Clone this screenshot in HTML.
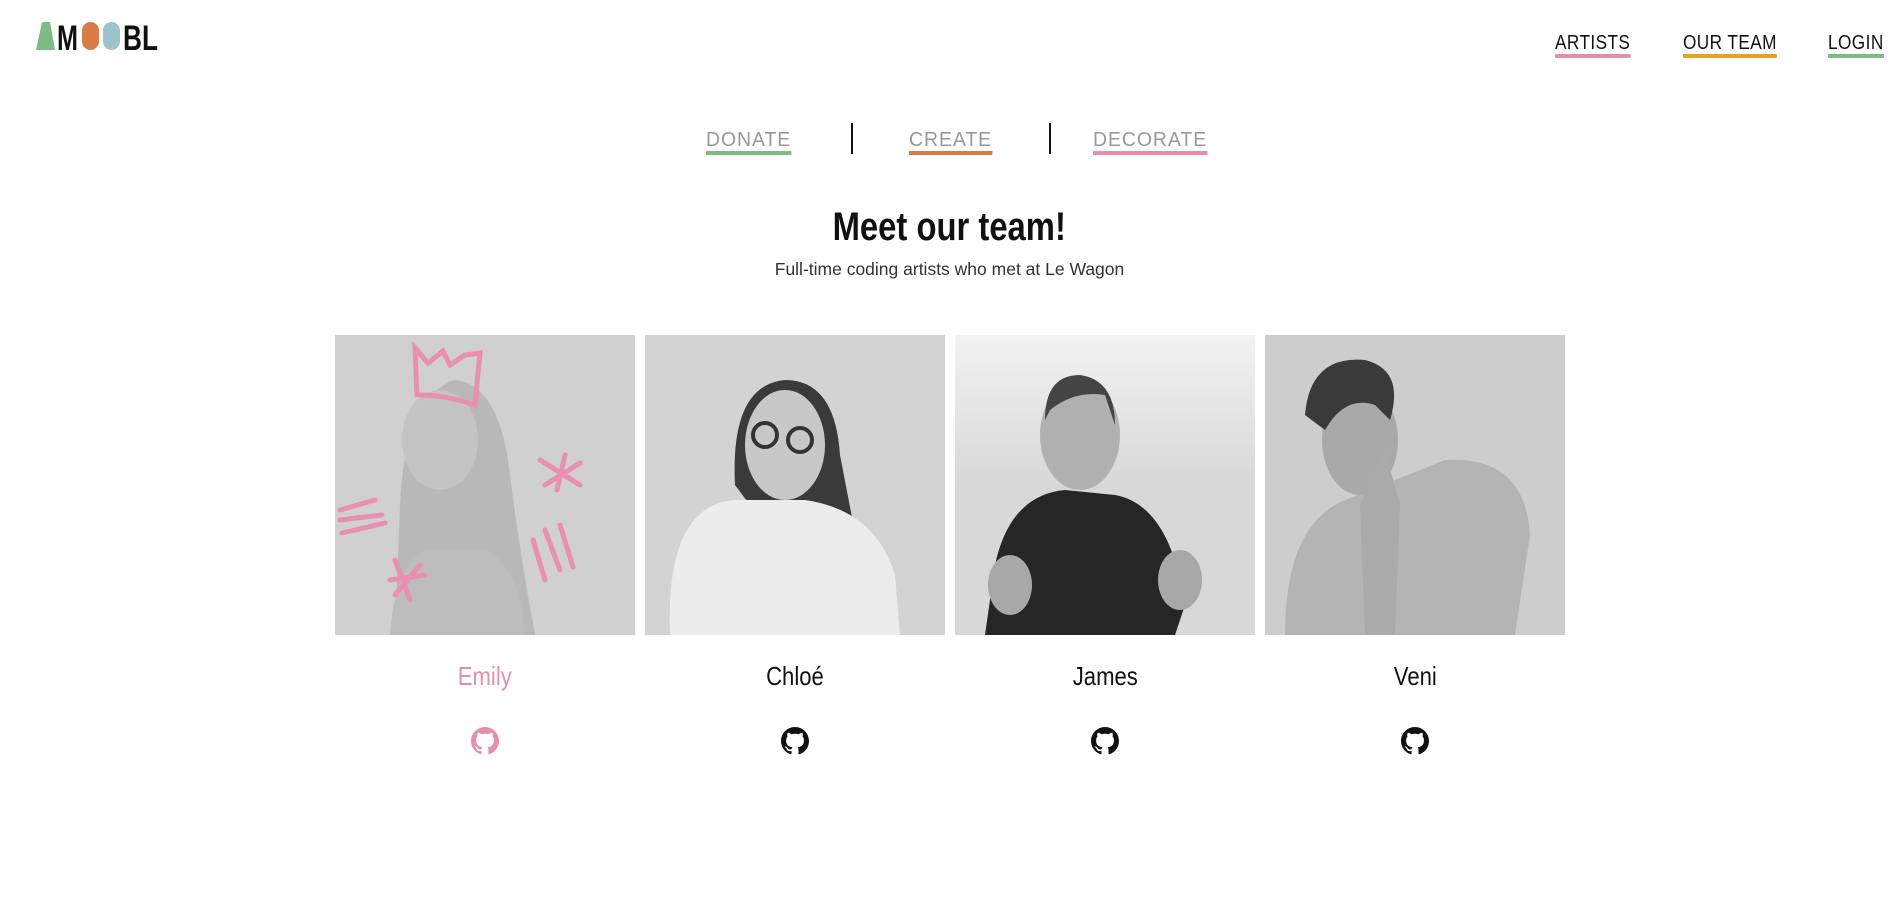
<!DOCTYPE html>
<html><head><meta charset="utf-8"><style>
html,body{margin:0;padding:0;background:#fff;width:1899px;height:916px;overflow:hidden;font-family:"Liberation Sans",sans-serif;}
.abs{position:absolute}
.nav a{position:absolute;top:32px;font-size:20px;color:#111;text-decoration:none;transform:scaleX(.86);transform-origin:left top;letter-spacing:.5px;border-bottom:4px solid;line-height:22px;padding-bottom:0}
.sub{position:absolute;top:129px;font-size:20px;color:#999;font-weight:300;letter-spacing:1px;line-height:22px;border-bottom:4px solid;transform:scaleX(.97);transform-origin:left top}
.div{position:absolute;top:123px;width:2px;height:31px;background:#111}
.photo{position:absolute;top:335px;width:300px;height:300px}
.name{position:absolute;top:661px;width:300px;text-align:center;font-size:26px;color:#111}
.name span{display:inline-block;transform:scaleX(.85)}
.gh{position:absolute;top:727px;width:300px;text-align:center}
</style></head><body>
<svg class="abs" style="left:36px;top:22px" width="130" height="30" viewBox="0 0 130 30">
<polygon points="6,0 14,0 19,28 0,28" fill="#7dba84"/>
<text x="0" y="28" font-family="Liberation Sans" font-weight="bold" font-size="35" fill="#111" transform="translate(21,0) scale(.72,1)">M</text>
<rect x="46" y="0" width="17" height="28" rx="8.5" fill="#d97b45"/>
<rect x="67" y="0" width="17" height="28" rx="8.5" fill="#9fc3cd"/>
<text x="0" y="28" font-family="Liberation Sans" font-weight="bold" font-size="35" fill="#111" transform="translate(87,0) scale(.75,1)">BL</text>
</svg>
<div class="nav">
<a style="left:1555px;border-color:#e38fae">ARTISTS</a>
<a style="left:1683px;border-color:#e5a31f">OUR TEAM</a>
<a style="left:1828px;border-color:#7dba84">LOGIN</a>
</div>
<div class="sub" style="left:706px;border-color:#7dba84">DONATE</div>
<div class="div" style="left:851px"></div>
<div class="sub" style="left:909px;border-color:#d97b45">CREATE</div>
<div class="div" style="left:1049px"></div>
<div class="sub" style="left:1093px;border-color:#e38fae">DECORATE</div>
<div class="abs" style="left:0;width:1899px;top:205px;text-align:center;font-size:40px;font-weight:bold;color:#111"><span style="display:inline-block;transform:scaleX(.82)">Meet our team!</span></div>
<div class="abs" style="left:0;width:1899px;top:259px;text-align:center;font-size:17.5px;color:#333">Full-time coding artists who met at Le Wagon</div>

<svg class="photo" style="left:335px" viewBox="0 0 300 300">
<rect width="300" height="300" fill="#d0d0d0"/>
<path d="M60 300 L65 170 Q70 60 120 45 Q165 50 175 140 Q185 220 200 300Z" fill="#b8b8b8"/>
<ellipse cx="105" cy="105" rx="38" ry="50" fill="#c4c4c4"/>
<path d="M55 300 Q60 230 90 215 L150 215 Q185 230 190 300Z" fill="#bcbcbc"/>
<g stroke="#e98fb0" stroke-width="5" fill="none" stroke-linecap="round">
<path d="M82 60 L80 13 L93 28 L108 16 L115 30 L130 20 L145 18 L140 70 Q110 60 85 60"/>
<path d="M5 55 L40 45 M5 65 L47 60 M7 78 L50 68" transform="translate(0,120)"/>
<path d="M205 125 L245 150 M230 120 L222 155 M210 150 L245 128"/>
<path d="M198 205 L210 245 M210 195 L225 235 M225 190 L238 232"/>
<path d="M60 225 L75 265 M55 245 L90 240 M60 260 L85 230"/>
</g>
</svg>
<svg class="photo" style="left:645px" viewBox="0 0 300 300">
<rect width="300" height="300" fill="#d3d3d3"/>
<path d="M90 150 Q85 50 140 45 Q190 45 195 120 L220 250 L180 270Z" fill="#3a3a3a"/>
<ellipse cx="140" cy="110" rx="40" ry="55" fill="#c8c8c8"/>
<path d="M25 300 Q20 170 90 165 L160 165 Q230 175 250 240 L255 300Z" fill="#ececec"/>
<circle cx="120" cy="100" r="12" fill="none" stroke="#333" stroke-width="4"/><circle cx="155" cy="105" r="12" fill="none" stroke="#333" stroke-width="4"/>
</svg>
<svg class="photo" style="left:955px" viewBox="0 0 300 300">
<defs><linearGradient id="g" x1="0" y1="0" x2="0" y2="1"><stop offset="0" stop-color="#f2f2f2"/><stop offset=".5" stop-color="#d8d8d8"/></linearGradient></defs>
<rect width="300" height="300" fill="url(#g)"/>
<ellipse cx="125" cy="100" rx="40" ry="55" fill="#b0b0b0"/>
<path d="M90 85 Q90 40 125 40 Q160 45 160 90 L150 60 Q120 55 95 75Z" fill="#444"/>
<path d="M30 300 L40 230 Q55 160 110 155 L160 160 Q215 170 230 270 L220 300Z" fill="#262626"/>
<ellipse cx="55" cy="250" rx="22" ry="30" fill="#a8a8a8"/>
<ellipse cx="225" cy="245" rx="22" ry="30" fill="#a8a8a8"/>
</svg>
<svg class="photo" style="left:1265px" viewBox="0 0 300 300">
<rect width="300" height="300" fill="#cdcdcd"/>
<path d="M20 300 Q20 190 80 165 L180 125 Q260 120 265 200 L250 300Z" fill="#b4b4b4"/>
<ellipse cx="95" cy="105" rx="38" ry="55" fill="#a9a9a9"/>
<path d="M40 80 Q45 20 100 25 Q140 35 125 85 L110 70 Q80 60 60 95Z" fill="#3a3a3a"/>
<path d="M95 170 L120 115 L135 170 L130 300 L100 300Z" fill="#aaa"/>
</svg>

<div class="name" style="left:335px;color:#e38fae"><span>Emily</span></div>
<div class="name" style="left:645px"><span>Chloé</span></div>
<div class="name" style="left:955px"><span>James</span></div>
<div class="name" style="left:1265px"><span>Veni</span></div>

<svg width="0" height="0" style="position:absolute"><defs><path id="gh" d="M8 0C3.580 0 0 3.580 0 8c0 3.540 2.290 6.530 5.470 7.590.4.07.55-.17.55-.38 0-.19-.01-.82-.01-1.490-2.010.37-2.530-.49-2.690-.94-.09-.23-.48-.94-.82-1.130-.28-.15-.68-.52-.01-.53.63-.01 1.080.58 1.230.82.72 1.210 1.870.87 2.330.66.07-.52.28-.87.51-1.070-1.780-.2-3.640-.89-3.640-3.950 0-.87.31-1.590.82-2.150-.08-.2-.36-1.020.08-2.120 0 0 .67-.21 2.200.82.64-.18 1.320-.27 2-.27.68 0 1.360.09 2 .27 1.530-1.040 2.200-.82 2.200-.82.44 1.100.16 1.920.08 2.120.51.56.82 1.270.82 2.150 0 3.070-1.870 3.750-3.650 3.950.29.25.54.73.54 1.480 0 1.070-.01 1.930-.01 2.200 0 .21.15.46.55.38A8.013 8.013 0 0016 8c0-4.420-3.580-8-8-8z"/></defs></svg>
<div class="gh" style="left:335px"><svg width="28" height="28" viewBox="0 0 16 16"><use href="#gh" fill="#e38fae"/></svg></div>
<div class="gh" style="left:645px"><svg width="28" height="28" viewBox="0 0 16 16"><use href="#gh" fill="#111"/></svg></div>
<div class="gh" style="left:955px"><svg width="28" height="28" viewBox="0 0 16 16"><use href="#gh" fill="#111"/></svg></div>
<div class="gh" style="left:1265px"><svg width="28" height="28" viewBox="0 0 16 16"><use href="#gh" fill="#111"/></svg></div>
</body></html>
